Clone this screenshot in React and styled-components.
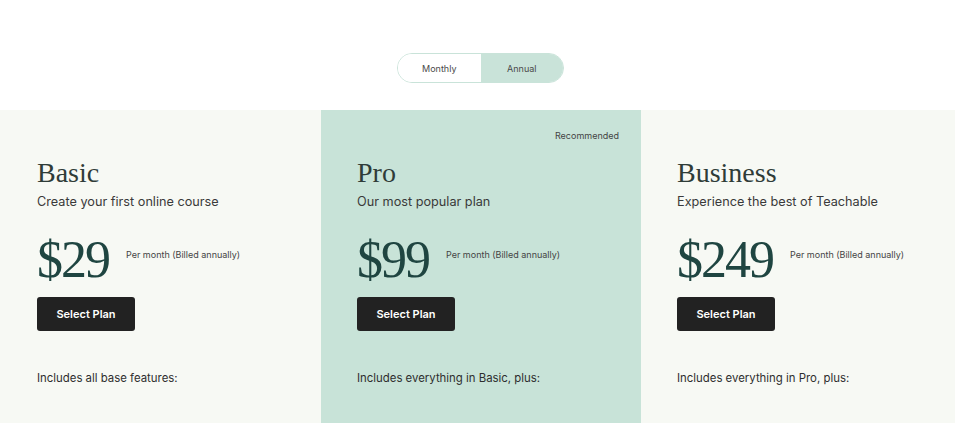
import React, { useState } from 'react';
import styled, { createGlobalStyle } from 'styled-components';

const GlobalStyle = createGlobalStyle`
  body {
    margin: 0;
    background: #ffffff;
    font-family: 'Inter', 'Noto Sans', sans-serif;
    color: #333;
  }
`;

const plans = [
  {
    name: 'Basic',
    tagline: 'Create your first online course',
    price: '$29',
    includes: 'Includes all base features:',
  },
  {
    name: 'Pro',
    tagline: 'Our most popular plan',
    price: '$99',
    includes: 'Includes everything in Basic, plus:',
    recommended: true,
  },
  {
    name: 'Business',
    tagline: 'Experience the best of Teachable',
    price: '$249',
    includes: 'Includes everything in Pro, plus:',
  },
];

const Page = styled.div`
  display: flex;
  flex-direction: column;
  width: 955px;
`;

const ToggleBar = styled.div`
  display: flex;
  justify-content: center;
  padding: 53px 0 27px 6px;
`;

const Toggle = styled.div`
  display: flex;
  width: 167px;
  height: 30px;
  box-sizing: border-box;
  border: 1px solid #c9e3d9;
  border-radius: 15px;
  overflow: hidden;
`;

const ToggleOption = styled.button`
  flex: 1;
  border: none;
  margin: 0;
  padding: 0;
  font-family: 'Inter', sans-serif;
  font-size: 9px;
  color: #4a4a4a;
  background: ${(p) => (p.$active ? '#c9e3d9' : '#ffffff')};
  cursor: pointer;
`;

const Grid = styled.div`
  display: grid;
  grid-template-columns: 321px 320px 314px;
`;

const Card = styled.div`
  display: flex;
  flex-direction: column;
  min-height: 313px;
  padding: 20px 22px 0 ${(p) => (p.$first ? 37 : 36)}px;
  background: ${(p) => (p.$highlight ? '#c8e3d8' : '#f7f9f4')};
`;

const Badge = styled.div`
  height: 12px;
  line-height: 12px;
  font-size: 9px;
  color: #444;
  text-align: right;
`;

const Title = styled.h2`
  margin: 14px 0 0;
  font-family: 'Liberation Serif', serif;
  font-weight: 400;
  font-size: 28px;
  line-height: 34px;
  color: #2f3c38;
`;

const Tagline = styled.p`
  margin: 3px 0 0;
  font-size: 12.7px;
  line-height: 18px;
  color: #3a3a3a;
`;

const PriceRow = styled.div`
  display: flex;
  align-items: flex-start;
  margin-top: 23px;
`;

const Price = styled.span`
  font-family: 'Liberation Serif', serif;
  font-size: 52px;
  line-height: 52px;
  letter-spacing: -2px;
  color: #1f4541;
`;

const PerMonth = styled.span`
  margin: 15px 0 0 17px;
  font-size: 9px;
  line-height: 12px;
  color: #444;
`;

const SelectButton = styled.button`
  align-self: flex-start;
  margin-top: 11px;
  width: 98px;
  height: 34px;
  border: none;
  border-radius: 3px;
  background: #222222;
  color: #fff;
  font-family: 'Inter', sans-serif;
  font-weight: 600;
  font-size: 11px;
  cursor: pointer;
`;

const Includes = styled.p`
  margin: 39px 0 0;
  font-size: 11.4px;
  line-height: 16px;
  font-weight: 400;
  color: #2e2e2e;
`;

const App = () => {
  const [period, setPeriod] = useState('annual');

  return (
    <Page>
      <GlobalStyle />
      <ToggleBar>
        <Toggle>
          <ToggleOption $active={period === 'monthly'} onClick={() => setPeriod('monthly')}>
            Monthly
          </ToggleOption>
          <ToggleOption $active={period === 'annual'} onClick={() => setPeriod('annual')}>
            Annual
          </ToggleOption>
        </Toggle>
      </ToggleBar>
      <Grid>
        {plans.map((plan, i) => (
          <Card key={plan.name} $highlight={plan.recommended} $first={i === 0}>
            <Badge>{plan.recommended ? 'Recommended' : ''}</Badge>
            <Title>{plan.name}</Title>
            <Tagline>{plan.tagline}</Tagline>
            <PriceRow>
              <Price>{plan.price}</Price>
              <PerMonth>Per month (Billed annually)</PerMonth>
            </PriceRow>
            <SelectButton>Select Plan</SelectButton>
            <Includes>{plan.includes}</Includes>
          </Card>
        ))}
      </Grid>
    </Page>
  );
};

export default App;
